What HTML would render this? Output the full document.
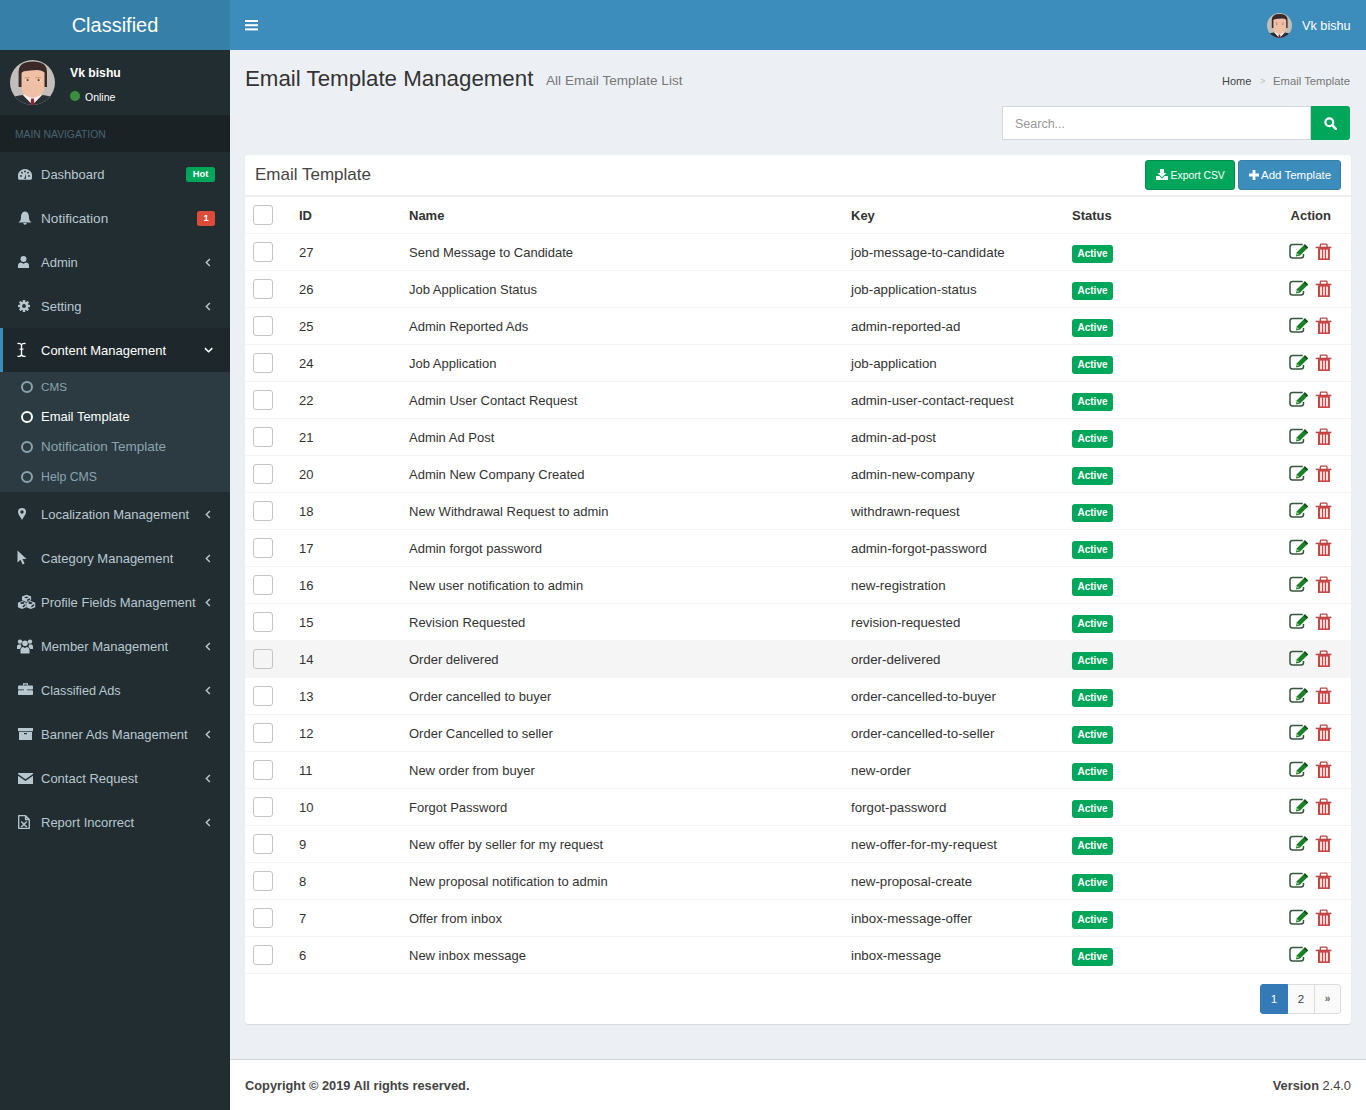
<!DOCTYPE html>
<html><head><meta charset="utf-8"><title>Email Template Management</title>
<style>
*{box-sizing:border-box;margin:0;padding:0}
html,body{width:1366px;height:1110px;overflow:hidden}
body{background:#ecf0f5;font-family:"Liberation Sans",sans-serif;color:#333;position:relative;font-size:13px}
.abs{position:absolute}
#logo{left:0;top:0;width:230px;height:50px;background:#367fa9;color:#fff;font-size:20px;line-height:50px;text-align:center}
#nav{left:230px;top:0;right:0;height:50px;background:#3c8dbc}
#side{left:0;top:50px;width:230px;height:1060px;background:#222d32}
#foot{left:230px;top:1059px;right:0;height:51px;background:#fff;border-top:1px solid #d2d6de}
.mi{position:absolute;left:0;width:230px;height:44px;color:#b8c7ce;font-size:13px}
.mi .t{position:absolute;left:41px;top:14px;line-height:16px;white-space:nowrap}
.mi svg.ic{position:absolute}
.mi .chev{position:absolute;left:204px;top:18px}
.sub{position:absolute;left:0;width:230px;height:30px;color:#8aa4af;font-size:13px}
.sub .t{position:absolute;left:41px;top:7px;line-height:16px;white-space:nowrap}
.sub .c{position:absolute;left:21px;top:9px;width:12px;height:12px;border:2px solid #8aa4af;border-radius:50%}
.mt{left:41px;line-height:16px;font-size:13px;white-space:nowrap}
.badge{position:absolute;color:#fff;font-weight:bold;font-size:9.4px;text-align:center;border-radius:2.5px}
#box{left:245px;top:155px;width:1106px;height:869px;background:#fff;border-radius:3px;box-shadow:0 1px 1px rgba(0,0,0,0.1)}
table{border-collapse:collapse;position:absolute;left:0;top:42px;width:1106px;table-layout:fixed}
td,th{height:37px;border-top:1px solid #f4f4f4;padding:2px 0 0 8px;text-align:left;white-space:nowrap;font-size:13px;color:#333;vertical-align:middle}
th{font-weight:bold;border-top:0;height:36px}
tr.h td{background:#f5f5f5}
.cb{display:inline-block;width:20px;height:20px;border:1px solid #c4c4c4;border-radius:3px;background:transparent;vertical-align:middle;position:relative;top:-1px}
.lbl{position:relative;top:1px;display:inline-block;background:#00a65a;color:#fff;font-weight:bold;font-size:10px;border-radius:3px;width:41px;height:18px;line-height:18px;text-align:center}
td.act{text-align:right;padding-right:15px}
.ai{display:inline-block;position:relative;width:50px;height:21px;vertical-align:middle;top:-1px}
</style></head>
<body>
<svg width="0" height="0" style="position:absolute">
<defs>
<symbol id="av" viewBox="0 0 45 45">
<clipPath id="avc"><circle cx="22.5" cy="22.5" r="22.5"/></clipPath>
<g clip-path="url(#avc)">
<rect width="45" height="45" fill="#c2bfbb"/>
<path d="M0 45 V39 Q5 35.5 13 35 L22.5 45Z M45 45 V39 Q40 35.5 32 35 L22.5 45Z" fill="#2b3036"/>
<path d="M13 35 L22.5 44.5 L32 35 L29 33.5 H16Z" fill="#f4f1ef"/>
<path d="M21.2 38.5 H23.8 L24.6 45 H20.4Z" fill="#8e2236"/>
<path d="M11.5 10 H34.5 V27 Q34.5 33 29 36 Q26 37.8 22.8 37.8 Q19.5 37.8 16.5 36 Q11.5 33 11.5 27Z" fill="#efc0a6"/>
<path d="M9.5 21 Q8.5 24 11.5 27Z M35.5 21 Q36.5 24 33.5 27Z" fill="#e8b296"/>
<path d="M8.6 27 V12 Q8.6 1.6 22.8 1.6 Q37 1.6 37 12 V27 H34.5 V12.5 Q32 10 27 10 Q20 10.3 14 11.3 Q11.5 12 11.5 13.5 V27Z" fill="#3a2b2a"/>
<path d="M14.5 17.6 H19.5 M25.5 17.6 H30.8" stroke="#d89a70" stroke-width="1.4"/>
<ellipse cx="17.3" cy="20.4" rx="2.4" ry="1.1" fill="#f7e6dc"/><ellipse cx="28.8" cy="20.4" rx="2.4" ry="1.1" fill="#f7e6dc"/>
<circle cx="17.6" cy="20.2" r="1.15" fill="#6b3a1f"/><circle cx="28.6" cy="20.2" r="1.15" fill="#6b3a1f"/>
</g>
</symbol>
</defs>
</svg>

<div id="logo" class="abs">Classified</div>
<div id="nav" class="abs">
  <svg class="abs" style="left:14.5px;top:20px" width="13" height="11" viewBox="0 0 13 11"><rect y="0" width="13" height="2" fill="#fff"/><rect y="4.2" width="13" height="2" fill="#fff"/><rect y="8.4" width="13" height="2" fill="#fff"/></svg>
  <svg class="abs" style="left:1037px;top:13px" width="25" height="25"><use href="#av"/></svg>
  <div class="abs" style="left:1072px;top:17.5px;line-height:16px;color:#fff;font-size:12.7px">Vk bishu</div>
</div>

<div id="side" class="abs">
  <svg class="abs" style="left:10px;top:10px" width="45" height="45"><use href="#av"/></svg>
  <div class="abs" style="left:70px;top:15px;line-height:16px;color:#fff;font-size:12.2px;font-weight:bold">Vk bishu</div>
  <div class="abs" style="left:70px;top:41px;width:10px;height:10px;border-radius:50%;background:#3a8f3e"></div>
  <div class="abs" style="left:85px;top:40.5px;line-height:12px;color:#fff;font-size:10.5px">Online</div>
  <div class="abs" style="left:0;top:65px;width:230px;height:37px;background:#1a2226;color:#4b646f;font-size:10.3px;line-height:39px;padding-left:15px">MAIN NAVIGATION</div>
</div>

<div class="abs" style="left:0;top:328px;width:230px;height:44px;background:#1e282c;border-left:3px solid #3c8dbc"></div>
<div class="abs" style="left:0;top:372px;width:230px;height:120px;background:#2c3b41"></div>
<svg class="abs" style="left:18px;top:169px" width="14" height="11" viewBox="0 0 14 11"><path d="M0.76 10.8 A7.2 7.2 0 1 1 13.24 10.8 Z" fill="#b8c7ce"/><circle cx="3" cy="7" r="0.9" fill="#222d32"/><circle cx="4" cy="3.7" r="0.9" fill="#222d32"/><circle cx="7" cy="2.4" r="0.9" fill="#222d32"/><circle cx="10" cy="3.7" r="0.9" fill="#222d32"/><circle cx="11" cy="7" r="0.9" fill="#222d32"/><path d="M6.2 10 L8 4.5 L7.8 10Z" fill="#222d32"/></svg>
<div class="abs mt" style="top:167px;color:#b8c7ce;font-size:13px">Dashboard</div>
<div class="abs badge" style="left:186px;top:167px;width:29px;height:15px;line-height:14px;background:#00a65a">Hot</div>
<svg class="abs" style="left:18px;top:211px" width="14" height="14" viewBox="0 0 14 14"><path d="M7 0.5 C3.5 1 3 4 3 6.5 C3 9 2 10 0.5 11.5 H13.5 C12 10 11 9 11 6.5 C11 4 10.5 1 7 0.5Z" fill="#b8c7ce"/><path d="M5.3 12 A1.7 1.7 0 0 0 8.7 12Z" fill="#b8c7ce"/></svg>
<div class="abs mt" style="top:211px;color:#b8c7ce;font-size:13.6px">Notification</div>
<div class="abs badge" style="left:197px;top:211px;width:18px;height:15px;line-height:14px;background:#dd4b39">1</div>
<svg class="abs" style="left:18px;top:256px" width="11" height="12" viewBox="0 0 11 12"><circle cx="5.5" cy="3" r="3" fill="#b8c7ce"/><path d="M0 12 V9.5 C0 7.5 1.5 6.5 3 6.5 L5.5 7.8 L8 6.5 C9.5 6.5 11 7.5 11 9.5 V12Z" fill="#b8c7ce"/></svg>
<div class="abs mt" style="top:255px;color:#b8c7ce;font-size:13px">Admin</div>
<svg class="abs" style="left:205px;top:258px" width="6" height="9" viewBox="0 0 6 9"><path d="M4.9 0.9 L1.3 4.5 L4.9 8.1" fill="none" stroke="#b8c7ce" stroke-width="1.45"/></svg>
<svg class="abs" style="left:18px;top:300px" width="12" height="12" viewBox="0 0 12 12"><g fill="#b8c7ce"><circle cx="6" cy="6" r="4.3"/><g><rect x="4.7" y="0" width="2.6" height="12" rx="0.6"/><rect x="4.7" y="0" width="2.6" height="12" rx="0.6" transform="rotate(45 6 6)"/><rect x="4.7" y="0" width="2.6" height="12" rx="0.6" transform="rotate(90 6 6)"/><rect x="4.7" y="0" width="2.6" height="12" rx="0.6" transform="rotate(135 6 6)"/></g></g><circle cx="6" cy="6" r="1.9" fill="#222d32"/></svg>
<div class="abs mt" style="top:299px;color:#b8c7ce;font-size:13px">Setting</div>
<svg class="abs" style="left:205px;top:302px" width="6" height="9" viewBox="0 0 6 9"><path d="M4.9 0.9 L1.3 4.5 L4.9 8.1" fill="none" stroke="#b8c7ce" stroke-width="1.45"/></svg>
<svg class="abs" style="left:17px;top:342px" width="9" height="16" viewBox="0 0 9 16"><path d="M1 1.5 Q3.6 1.1 4.5 2.9 Q5.4 1.1 8 1.5 M4.5 2.9 V12.9 M1 14.3 Q3.6 14.7 4.5 12.9 Q5.4 14.7 8 14.3 M3 7.1 H6" fill="none" stroke="#fff" stroke-width="1.35" stroke-linecap="round"/></svg>
<div class="abs mt" style="top:343px;color:#fff;font-size:13px">Content Management</div>
<svg class="abs" style="left:204px;top:346.5px" width="10" height="7" viewBox="0 0 10 7"><path d="M0.9 1.1 L4.6 4.8 L8.3 1.1" fill="none" stroke="#fff" stroke-width="1.5"/></svg>
<svg class="abs" style="left:18px;top:508px" width="8" height="12" viewBox="0 0 8 12"><path d="M4 0 A4 4 0 0 0 0 4 C0 6.5 2.5 9 4 12 C5.5 9 8 6.5 8 4 A4 4 0 0 0 4 0Z M4 2.3 A1.7 1.7 0 1 1 4 5.7 A1.7 1.7 0 1 1 4 2.3Z" fill="#b8c7ce" fill-rule="evenodd"/></svg>
<div class="abs mt" style="top:507px;color:#b8c7ce;font-size:13px">Localization Management</div>
<svg class="abs" style="left:205px;top:510px" width="6" height="9" viewBox="0 0 6 9"><path d="M4.9 0.9 L1.3 4.5 L4.9 8.1" fill="none" stroke="#b8c7ce" stroke-width="1.45"/></svg>
<svg class="abs" style="left:17px;top:550px" width="10" height="15" viewBox="0 0 10 15"><path d="M0.5 0.5 V12.5 L3.5 9.8 L5.6 14.5 L7.6 13.6 L5.5 9 H9.5Z" fill="#b8c7ce"/></svg>
<div class="abs mt" style="top:551px;color:#b8c7ce;font-size:13px">Category Management</div>
<svg class="abs" style="left:205px;top:554px" width="6" height="9" viewBox="0 0 6 9"><path d="M4.9 0.9 L1.3 4.5 L4.9 8.1" fill="none" stroke="#b8c7ce" stroke-width="1.45"/></svg>
<svg class="abs" style="left:14px;top:590px" width="24" height="24" viewBox="0 0 24 24"><g fill="#b8c7ce"><path d="M8 11 L12.1 12.8 V17.2 L8 19 L3.9 17.2 V12.8Z"/><path d="M16.75 11 L21.2 12.8 V17.2 L16.75 19 L12.3 17.2 V12.8Z"/><path d="M12.55 4.8 L17.1 6.6 V10.3 L12.55 12 L8 10.3 V6.6Z"/></g><g fill="#222d32"><path d="M10 7.4 L12.4 6.6 L14.8 7.4 L12.4 8.2Z"/><ellipse cx="8.4" cy="13" rx="2.1" ry="1.05"/><ellipse cx="16.4" cy="13" rx="2.1" ry="1.05"/></g><g stroke="#222d32" stroke-width="1.5" stroke-linecap="round"><path d="M13.6 10.2 L15.6 9.1"/><path d="M9.4 16.4 L11 15"/><path d="M17.9 16.4 L19.6 15"/></g></svg>
<div class="abs mt" style="top:595px;color:#b8c7ce;font-size:13px">Profile Fields Management</div>
<svg class="abs" style="left:205px;top:598px" width="6" height="9" viewBox="0 0 6 9"><path d="M4.9 0.9 L1.3 4.5 L4.9 8.1" fill="none" stroke="#b8c7ce" stroke-width="1.45"/></svg>
<svg class="abs" style="left:17px;top:638.5px" width="16" height="15" viewBox="0 0 16 15"><g fill="#b8c7ce"><circle cx="3" cy="2.6" r="2.2"/><circle cx="13" cy="2.6" r="2.2"/><circle cx="8" cy="4.2" r="2.8"/><path d="M0 10 V7.5 C0 6 1 5.4 2.2 5.4 H4.3 C3.8 6.4 4.2 7.5 4.6 8 C3.5 8.5 3 9.3 3 10Z"/><path d="M16 10 V7.5 C16 6 15 5.4 13.8 5.4 H11.7 C12.2 6.4 11.8 7.5 11.4 8 C12.5 8.5 13 9.3 13 10Z"/><path d="M3.5 14.5 V11 C3.5 9 5 8 6.2 8 L8 9 L9.8 8 C11 8 12.5 9 12.5 11 V14.5Z"/></g></svg>
<div class="abs mt" style="top:639px;color:#b8c7ce;font-size:13px">Member Management</div>
<svg class="abs" style="left:205px;top:642px" width="6" height="9" viewBox="0 0 6 9"><path d="M4.9 0.9 L1.3 4.5 L4.9 8.1" fill="none" stroke="#b8c7ce" stroke-width="1.45"/></svg>
<svg class="abs" style="left:17.5px;top:683px" width="15" height="12" viewBox="0 0 15 12"><g fill="#b8c7ce"><path d="M5 0.3 H10 V2.6 H8.9 V1.4 H6.1 V2.6 H5Z"/><rect x="0" y="2.6" width="15" height="3.9" rx="0.8"/><rect x="0" y="7.3" width="15" height="4.7" rx="0.8"/><rect x="6" y="6" width="3" height="2.2"/></g></svg>
<div class="abs mt" style="top:683px;color:#b8c7ce;font-size:12.7px">Classified Ads</div>
<svg class="abs" style="left:205px;top:686px" width="6" height="9" viewBox="0 0 6 9"><path d="M4.9 0.9 L1.3 4.5 L4.9 8.1" fill="none" stroke="#b8c7ce" stroke-width="1.45"/></svg>
<svg class="abs" style="left:17.5px;top:728px" width="15" height="12" viewBox="0 0 15 12"><g fill="#b8c7ce"><rect x="0" y="0" width="15" height="3.2"/><rect x="1" y="3.9" width="13" height="8.1"/></g><rect x="6" y="5" width="3" height="1.2" fill="#222d32"/></svg>
<div class="abs mt" style="top:727px;color:#b8c7ce;font-size:13px">Banner Ads Management</div>
<svg class="abs" style="left:205px;top:730px" width="6" height="9" viewBox="0 0 6 9"><path d="M4.9 0.9 L1.3 4.5 L4.9 8.1" fill="none" stroke="#b8c7ce" stroke-width="1.45"/></svg>
<svg class="abs" style="left:17.5px;top:773px" width="15" height="11" viewBox="0 0 15 11"><path d="M0 0 H15 V1 L7.5 6.2 L0 1Z" fill="#b8c7ce"/><path d="M0 2.8 L7.5 8 L15 2.8 V11 H0Z" fill="#b8c7ce"/></svg>
<div class="abs mt" style="top:771px;color:#b8c7ce;font-size:13px">Contact Request</div>
<svg class="abs" style="left:205px;top:774px" width="6" height="9" viewBox="0 0 6 9"><path d="M4.9 0.9 L1.3 4.5 L4.9 8.1" fill="none" stroke="#b8c7ce" stroke-width="1.45"/></svg>
<svg class="abs" style="left:18px;top:815px" width="12" height="14" viewBox="0 0 12 14"><path d="M0.7 0.7 H7.5 L11.3 4.5 V13.3 H0.7Z M7.5 0.7 V4.5 H11.3" fill="none" stroke="#b8c7ce" stroke-width="1.3" stroke-linejoin="round"/><path d="M3.2 6.5 L8.8 12 M8.8 6.5 L3.2 12" stroke="#b8c7ce" stroke-width="1.4"/></svg>
<div class="abs mt" style="top:815px;color:#b8c7ce;font-size:13px">Report Incorrect</div>
<svg class="abs" style="left:205px;top:818px" width="6" height="9" viewBox="0 0 6 9"><path d="M4.9 0.9 L1.3 4.5 L4.9 8.1" fill="none" stroke="#b8c7ce" stroke-width="1.45"/></svg>
<div class="abs" style="left:21px;top:381px;width:12px;height:12px;border:2px solid #8aa4af;border-radius:50%"></div>
<div class="abs mt" style="top:379px;color:#8aa4af;font-size:11.7px">CMS</div>
<div class="abs" style="left:21px;top:411px;width:12px;height:12px;border:2px solid #fff;border-radius:50%"></div>
<div class="abs mt" style="top:409px;color:#fff;font-size:13px">Email Template</div>
<div class="abs" style="left:21px;top:441px;width:12px;height:12px;border:2px solid #8aa4af;border-radius:50%"></div>
<div class="abs mt" style="top:439px;color:#8aa4af;font-size:13.5px">Notification Template</div>
<div class="abs" style="left:21px;top:471px;width:12px;height:12px;border:2px solid #8aa4af;border-radius:50%"></div>
<div class="abs mt" style="top:469px;color:#8aa4af;font-size:12.3px">Help CMS</div>
<div id="content" class="abs" style="left:230px;top:50px;right:0;height:1009px">
  <div class="abs" style="left:15px;top:14px;line-height:30px;font-size:22.3px;color:#333;white-space:nowrap">Email Template Management</div>
  <div class="abs" style="left:316px;top:22px;line-height:18px;font-size:13.6px;color:#777;white-space:nowrap">All Email Template List</div>
  <div class="abs" style="left:992px;top:24px;line-height:14px;font-size:11px;color:#444;white-space:nowrap">Home</div>
  <div class="abs" style="left:1030px;top:24px;line-height:14px;font-size:9.5px;color:#bbb">&gt;</div>
  <div class="abs" style="left:1043px;top:24px;line-height:14px;font-size:11.3px;color:#777;white-space:nowrap">Email Template</div>
  <div class="abs" style="left:772px;top:56px;width:309px;height:34px;background:#fff;border:1px solid #d2d6de"></div>
  <div class="abs" style="left:785px;top:66px;line-height:16px;font-size:12.5px;color:#999">Search...</div>
  <div class="abs" style="left:1081px;top:56px;width:39px;height:34px;background:#00a65a;border-radius:0 3px 3px 0"><svg class="abs" style="left:13px;top:11px" width="13" height="13" viewBox="0 0 13 13"><circle cx="5.3" cy="5.3" r="3.9" fill="none" stroke="#fff" stroke-width="2.2"/><path d="M8.2 8.2 L11.8 11.8" stroke="#fff" stroke-width="2.6" stroke-linecap="round"/></svg></div>
</div>

<div id="box" class="abs">
  <div class="abs" style="left:0;top:0;width:1106px;height:42px;border-bottom:2px solid #f0f0f0"></div>
  <div class="abs" style="left:0;top:818px;width:1106px;height:1px;background:#f4f4f4"></div>
  <div class="abs" style="left:10px;top:9px;line-height:22px;font-size:17px;color:#444">Email Template</div>
  <div class="abs" style="left:900px;top:5px;width:90px;height:30px;background:#00a65a;border:1px solid #008d4c;border-radius:3px;color:#fff;font-size:10.4px;line-height:30px;padding-left:24.5px"><svg class="abs" style="left:10px;top:8px" width="12" height="11" viewBox="0 0 12 11"><path d="M4 0 H8 V4 H10.5 L6 8.3 L1.5 4 H4Z" fill="#fff"/><path d="M0 7 H3.3 L6 9.6 L8.7 7 H12 V11 H0Z" fill="#fff"/></svg>Export CSV</div>
  <div class="abs" style="left:993px;top:5px;width:103px;height:30px;background:#3c8dbc;border:1px solid #367fa9;border-radius:3px;color:#fff;font-size:11.5px;line-height:28px;padding-left:22px"><svg class="abs" style="left:10px;top:9px" width="10" height="10" viewBox="0 0 10 10"><path d="M3.6 0 H6.4 V3.6 H10 V6.4 H6.4 V10 H3.6 V6.4 H0 V3.6 H3.6Z" fill="#fff"/></svg>Add Template</div>
  <div class="abs" style="left:1015px;top:829px;width:28px;height:30px;background:#337ab7;border:1px solid #337ab7;border-radius:3px 0 0 3px;color:#fff;font-size:11.5px;line-height:28px;text-align:center">1</div>
  <div class="abs" style="left:1043px;top:829px;width:27px;height:30px;background:#fafafa;border:1px solid #ddd;border-left:0;color:#444;font-size:11.5px;line-height:28px;text-align:center">2</div>
  <div class="abs" style="left:1069px;top:829px;width:27px;height:30px;background:#fafafa;border:1px solid #ddd;border-radius:0 3px 3px 0;color:#666;font-size:10px;font-weight:bold;line-height:28px;text-align:center">&raquo;</div>
  <table id="tbl"><colgroup><col style="width:46px"><col style="width:110px"><col style="width:442px"><col style="width:221px"><col style="width:180px"><col></colgroup><tr><th><span class="cb" style="top:-1px"></span></th><th>ID</th><th>Name</th><th>Key</th><th>Status</th><th class="act" style="text-align:right;padding-right:20px">Action</th></tr><tr><td><span class="cb"></span></td><td>27</td><td>Send Message to Candidate</td><td style="font-size:13.3px">job-message-to-candidate</td><td><span class="lbl">Active</span></td><td class="act"><span class="ai"><svg class="abs" style="left:0;top:0" width="25" height="21" viewBox="0 0 25 21"><path d="M16.7 3.6 H6.5 Q4 3.6 4 6.1 V14.6 Q4 17.1 6.5 17.1 H15 Q17.5 17.1 17.5 14.6 V13" fill="none" stroke="#35573d" stroke-width="1.5"/><path d="M10.9 11.2 L18.9 3.2 L22.1 6.4 L14.1 14.4 L10 15.5Z" fill="#1c8026"/><path d="M17.6 4.5 L18.9 3.2 L22.1 6.4 L20.8 7.7Z" fill="#0f4d18"/><circle cx="11.9" cy="13.3" r="0.8" fill="#bfe8bf"/></svg><svg class="abs" style="left:25px;top:0" width="25" height="21" viewBox="0 0 25 21"><path d="M9.3 6 V3.9 Q9.3 3.1 10.1 3.1 H15.2 Q16 3.1 16 3.9 V6" fill="none" stroke="#b84545" stroke-width="1.3"/><rect x="4.7" y="5.7" width="15.7" height="1.5" fill="#bf4343"/><rect x="7" y="7" width="11.9" height="12" rx="0.6" fill="#cc4444"/><rect x="9" y="8.6" width="2" height="8.8" fill="#fde0dc"/><rect x="12" y="8.6" width="2" height="8.8" fill="#fbd5d5"/><rect x="15" y="8.6" width="2" height="8.8" fill="#fde0dc"/></svg></span></td></tr><tr><td><span class="cb"></span></td><td>26</td><td>Job Application Status</td><td style="font-size:13.3px">job-application-status</td><td><span class="lbl">Active</span></td><td class="act"><span class="ai"><svg class="abs" style="left:0;top:0" width="25" height="21" viewBox="0 0 25 21"><path d="M16.7 3.6 H6.5 Q4 3.6 4 6.1 V14.6 Q4 17.1 6.5 17.1 H15 Q17.5 17.1 17.5 14.6 V13" fill="none" stroke="#35573d" stroke-width="1.5"/><path d="M10.9 11.2 L18.9 3.2 L22.1 6.4 L14.1 14.4 L10 15.5Z" fill="#1c8026"/><path d="M17.6 4.5 L18.9 3.2 L22.1 6.4 L20.8 7.7Z" fill="#0f4d18"/><circle cx="11.9" cy="13.3" r="0.8" fill="#bfe8bf"/></svg><svg class="abs" style="left:25px;top:0" width="25" height="21" viewBox="0 0 25 21"><path d="M9.3 6 V3.9 Q9.3 3.1 10.1 3.1 H15.2 Q16 3.1 16 3.9 V6" fill="none" stroke="#b84545" stroke-width="1.3"/><rect x="4.7" y="5.7" width="15.7" height="1.5" fill="#bf4343"/><rect x="7" y="7" width="11.9" height="12" rx="0.6" fill="#cc4444"/><rect x="9" y="8.6" width="2" height="8.8" fill="#fde0dc"/><rect x="12" y="8.6" width="2" height="8.8" fill="#fbd5d5"/><rect x="15" y="8.6" width="2" height="8.8" fill="#fde0dc"/></svg></span></td></tr><tr><td><span class="cb"></span></td><td>25</td><td>Admin Reported Ads</td><td style="font-size:13.3px">admin-reported-ad</td><td><span class="lbl">Active</span></td><td class="act"><span class="ai"><svg class="abs" style="left:0;top:0" width="25" height="21" viewBox="0 0 25 21"><path d="M16.7 3.6 H6.5 Q4 3.6 4 6.1 V14.6 Q4 17.1 6.5 17.1 H15 Q17.5 17.1 17.5 14.6 V13" fill="none" stroke="#35573d" stroke-width="1.5"/><path d="M10.9 11.2 L18.9 3.2 L22.1 6.4 L14.1 14.4 L10 15.5Z" fill="#1c8026"/><path d="M17.6 4.5 L18.9 3.2 L22.1 6.4 L20.8 7.7Z" fill="#0f4d18"/><circle cx="11.9" cy="13.3" r="0.8" fill="#bfe8bf"/></svg><svg class="abs" style="left:25px;top:0" width="25" height="21" viewBox="0 0 25 21"><path d="M9.3 6 V3.9 Q9.3 3.1 10.1 3.1 H15.2 Q16 3.1 16 3.9 V6" fill="none" stroke="#b84545" stroke-width="1.3"/><rect x="4.7" y="5.7" width="15.7" height="1.5" fill="#bf4343"/><rect x="7" y="7" width="11.9" height="12" rx="0.6" fill="#cc4444"/><rect x="9" y="8.6" width="2" height="8.8" fill="#fde0dc"/><rect x="12" y="8.6" width="2" height="8.8" fill="#fbd5d5"/><rect x="15" y="8.6" width="2" height="8.8" fill="#fde0dc"/></svg></span></td></tr><tr><td><span class="cb"></span></td><td>24</td><td>Job Application</td><td style="font-size:13.3px">job-application</td><td><span class="lbl">Active</span></td><td class="act"><span class="ai"><svg class="abs" style="left:0;top:0" width="25" height="21" viewBox="0 0 25 21"><path d="M16.7 3.6 H6.5 Q4 3.6 4 6.1 V14.6 Q4 17.1 6.5 17.1 H15 Q17.5 17.1 17.5 14.6 V13" fill="none" stroke="#35573d" stroke-width="1.5"/><path d="M10.9 11.2 L18.9 3.2 L22.1 6.4 L14.1 14.4 L10 15.5Z" fill="#1c8026"/><path d="M17.6 4.5 L18.9 3.2 L22.1 6.4 L20.8 7.7Z" fill="#0f4d18"/><circle cx="11.9" cy="13.3" r="0.8" fill="#bfe8bf"/></svg><svg class="abs" style="left:25px;top:0" width="25" height="21" viewBox="0 0 25 21"><path d="M9.3 6 V3.9 Q9.3 3.1 10.1 3.1 H15.2 Q16 3.1 16 3.9 V6" fill="none" stroke="#b84545" stroke-width="1.3"/><rect x="4.7" y="5.7" width="15.7" height="1.5" fill="#bf4343"/><rect x="7" y="7" width="11.9" height="12" rx="0.6" fill="#cc4444"/><rect x="9" y="8.6" width="2" height="8.8" fill="#fde0dc"/><rect x="12" y="8.6" width="2" height="8.8" fill="#fbd5d5"/><rect x="15" y="8.6" width="2" height="8.8" fill="#fde0dc"/></svg></span></td></tr><tr><td><span class="cb"></span></td><td>22</td><td>Admin User Contact Request</td><td style="font-size:13.3px">admin-user-contact-request</td><td><span class="lbl">Active</span></td><td class="act"><span class="ai"><svg class="abs" style="left:0;top:0" width="25" height="21" viewBox="0 0 25 21"><path d="M16.7 3.6 H6.5 Q4 3.6 4 6.1 V14.6 Q4 17.1 6.5 17.1 H15 Q17.5 17.1 17.5 14.6 V13" fill="none" stroke="#35573d" stroke-width="1.5"/><path d="M10.9 11.2 L18.9 3.2 L22.1 6.4 L14.1 14.4 L10 15.5Z" fill="#1c8026"/><path d="M17.6 4.5 L18.9 3.2 L22.1 6.4 L20.8 7.7Z" fill="#0f4d18"/><circle cx="11.9" cy="13.3" r="0.8" fill="#bfe8bf"/></svg><svg class="abs" style="left:25px;top:0" width="25" height="21" viewBox="0 0 25 21"><path d="M9.3 6 V3.9 Q9.3 3.1 10.1 3.1 H15.2 Q16 3.1 16 3.9 V6" fill="none" stroke="#b84545" stroke-width="1.3"/><rect x="4.7" y="5.7" width="15.7" height="1.5" fill="#bf4343"/><rect x="7" y="7" width="11.9" height="12" rx="0.6" fill="#cc4444"/><rect x="9" y="8.6" width="2" height="8.8" fill="#fde0dc"/><rect x="12" y="8.6" width="2" height="8.8" fill="#fbd5d5"/><rect x="15" y="8.6" width="2" height="8.8" fill="#fde0dc"/></svg></span></td></tr><tr><td><span class="cb"></span></td><td>21</td><td>Admin Ad Post</td><td style="font-size:13.3px">admin-ad-post</td><td><span class="lbl">Active</span></td><td class="act"><span class="ai"><svg class="abs" style="left:0;top:0" width="25" height="21" viewBox="0 0 25 21"><path d="M16.7 3.6 H6.5 Q4 3.6 4 6.1 V14.6 Q4 17.1 6.5 17.1 H15 Q17.5 17.1 17.5 14.6 V13" fill="none" stroke="#35573d" stroke-width="1.5"/><path d="M10.9 11.2 L18.9 3.2 L22.1 6.4 L14.1 14.4 L10 15.5Z" fill="#1c8026"/><path d="M17.6 4.5 L18.9 3.2 L22.1 6.4 L20.8 7.7Z" fill="#0f4d18"/><circle cx="11.9" cy="13.3" r="0.8" fill="#bfe8bf"/></svg><svg class="abs" style="left:25px;top:0" width="25" height="21" viewBox="0 0 25 21"><path d="M9.3 6 V3.9 Q9.3 3.1 10.1 3.1 H15.2 Q16 3.1 16 3.9 V6" fill="none" stroke="#b84545" stroke-width="1.3"/><rect x="4.7" y="5.7" width="15.7" height="1.5" fill="#bf4343"/><rect x="7" y="7" width="11.9" height="12" rx="0.6" fill="#cc4444"/><rect x="9" y="8.6" width="2" height="8.8" fill="#fde0dc"/><rect x="12" y="8.6" width="2" height="8.8" fill="#fbd5d5"/><rect x="15" y="8.6" width="2" height="8.8" fill="#fde0dc"/></svg></span></td></tr><tr><td><span class="cb"></span></td><td>20</td><td>Admin New Company Created</td><td style="font-size:13.3px">admin-new-company</td><td><span class="lbl">Active</span></td><td class="act"><span class="ai"><svg class="abs" style="left:0;top:0" width="25" height="21" viewBox="0 0 25 21"><path d="M16.7 3.6 H6.5 Q4 3.6 4 6.1 V14.6 Q4 17.1 6.5 17.1 H15 Q17.5 17.1 17.5 14.6 V13" fill="none" stroke="#35573d" stroke-width="1.5"/><path d="M10.9 11.2 L18.9 3.2 L22.1 6.4 L14.1 14.4 L10 15.5Z" fill="#1c8026"/><path d="M17.6 4.5 L18.9 3.2 L22.1 6.4 L20.8 7.7Z" fill="#0f4d18"/><circle cx="11.9" cy="13.3" r="0.8" fill="#bfe8bf"/></svg><svg class="abs" style="left:25px;top:0" width="25" height="21" viewBox="0 0 25 21"><path d="M9.3 6 V3.9 Q9.3 3.1 10.1 3.1 H15.2 Q16 3.1 16 3.9 V6" fill="none" stroke="#b84545" stroke-width="1.3"/><rect x="4.7" y="5.7" width="15.7" height="1.5" fill="#bf4343"/><rect x="7" y="7" width="11.9" height="12" rx="0.6" fill="#cc4444"/><rect x="9" y="8.6" width="2" height="8.8" fill="#fde0dc"/><rect x="12" y="8.6" width="2" height="8.8" fill="#fbd5d5"/><rect x="15" y="8.6" width="2" height="8.8" fill="#fde0dc"/></svg></span></td></tr><tr><td><span class="cb"></span></td><td>18</td><td>New Withdrawal Request to admin</td><td style="font-size:13.3px">withdrawn-request</td><td><span class="lbl">Active</span></td><td class="act"><span class="ai"><svg class="abs" style="left:0;top:0" width="25" height="21" viewBox="0 0 25 21"><path d="M16.7 3.6 H6.5 Q4 3.6 4 6.1 V14.6 Q4 17.1 6.5 17.1 H15 Q17.5 17.1 17.5 14.6 V13" fill="none" stroke="#35573d" stroke-width="1.5"/><path d="M10.9 11.2 L18.9 3.2 L22.1 6.4 L14.1 14.4 L10 15.5Z" fill="#1c8026"/><path d="M17.6 4.5 L18.9 3.2 L22.1 6.4 L20.8 7.7Z" fill="#0f4d18"/><circle cx="11.9" cy="13.3" r="0.8" fill="#bfe8bf"/></svg><svg class="abs" style="left:25px;top:0" width="25" height="21" viewBox="0 0 25 21"><path d="M9.3 6 V3.9 Q9.3 3.1 10.1 3.1 H15.2 Q16 3.1 16 3.9 V6" fill="none" stroke="#b84545" stroke-width="1.3"/><rect x="4.7" y="5.7" width="15.7" height="1.5" fill="#bf4343"/><rect x="7" y="7" width="11.9" height="12" rx="0.6" fill="#cc4444"/><rect x="9" y="8.6" width="2" height="8.8" fill="#fde0dc"/><rect x="12" y="8.6" width="2" height="8.8" fill="#fbd5d5"/><rect x="15" y="8.6" width="2" height="8.8" fill="#fde0dc"/></svg></span></td></tr><tr><td><span class="cb"></span></td><td>17</td><td>Admin forgot password</td><td style="font-size:13.3px">admin-forgot-password</td><td><span class="lbl">Active</span></td><td class="act"><span class="ai"><svg class="abs" style="left:0;top:0" width="25" height="21" viewBox="0 0 25 21"><path d="M16.7 3.6 H6.5 Q4 3.6 4 6.1 V14.6 Q4 17.1 6.5 17.1 H15 Q17.5 17.1 17.5 14.6 V13" fill="none" stroke="#35573d" stroke-width="1.5"/><path d="M10.9 11.2 L18.9 3.2 L22.1 6.4 L14.1 14.4 L10 15.5Z" fill="#1c8026"/><path d="M17.6 4.5 L18.9 3.2 L22.1 6.4 L20.8 7.7Z" fill="#0f4d18"/><circle cx="11.9" cy="13.3" r="0.8" fill="#bfe8bf"/></svg><svg class="abs" style="left:25px;top:0" width="25" height="21" viewBox="0 0 25 21"><path d="M9.3 6 V3.9 Q9.3 3.1 10.1 3.1 H15.2 Q16 3.1 16 3.9 V6" fill="none" stroke="#b84545" stroke-width="1.3"/><rect x="4.7" y="5.7" width="15.7" height="1.5" fill="#bf4343"/><rect x="7" y="7" width="11.9" height="12" rx="0.6" fill="#cc4444"/><rect x="9" y="8.6" width="2" height="8.8" fill="#fde0dc"/><rect x="12" y="8.6" width="2" height="8.8" fill="#fbd5d5"/><rect x="15" y="8.6" width="2" height="8.8" fill="#fde0dc"/></svg></span></td></tr><tr><td><span class="cb"></span></td><td>16</td><td>New user notification to admin</td><td style="font-size:13.3px">new-registration</td><td><span class="lbl">Active</span></td><td class="act"><span class="ai"><svg class="abs" style="left:0;top:0" width="25" height="21" viewBox="0 0 25 21"><path d="M16.7 3.6 H6.5 Q4 3.6 4 6.1 V14.6 Q4 17.1 6.5 17.1 H15 Q17.5 17.1 17.5 14.6 V13" fill="none" stroke="#35573d" stroke-width="1.5"/><path d="M10.9 11.2 L18.9 3.2 L22.1 6.4 L14.1 14.4 L10 15.5Z" fill="#1c8026"/><path d="M17.6 4.5 L18.9 3.2 L22.1 6.4 L20.8 7.7Z" fill="#0f4d18"/><circle cx="11.9" cy="13.3" r="0.8" fill="#bfe8bf"/></svg><svg class="abs" style="left:25px;top:0" width="25" height="21" viewBox="0 0 25 21"><path d="M9.3 6 V3.9 Q9.3 3.1 10.1 3.1 H15.2 Q16 3.1 16 3.9 V6" fill="none" stroke="#b84545" stroke-width="1.3"/><rect x="4.7" y="5.7" width="15.7" height="1.5" fill="#bf4343"/><rect x="7" y="7" width="11.9" height="12" rx="0.6" fill="#cc4444"/><rect x="9" y="8.6" width="2" height="8.8" fill="#fde0dc"/><rect x="12" y="8.6" width="2" height="8.8" fill="#fbd5d5"/><rect x="15" y="8.6" width="2" height="8.8" fill="#fde0dc"/></svg></span></td></tr><tr><td><span class="cb"></span></td><td>15</td><td>Revision Requested</td><td style="font-size:13.3px">revision-requested</td><td><span class="lbl">Active</span></td><td class="act"><span class="ai"><svg class="abs" style="left:0;top:0" width="25" height="21" viewBox="0 0 25 21"><path d="M16.7 3.6 H6.5 Q4 3.6 4 6.1 V14.6 Q4 17.1 6.5 17.1 H15 Q17.5 17.1 17.5 14.6 V13" fill="none" stroke="#35573d" stroke-width="1.5"/><path d="M10.9 11.2 L18.9 3.2 L22.1 6.4 L14.1 14.4 L10 15.5Z" fill="#1c8026"/><path d="M17.6 4.5 L18.9 3.2 L22.1 6.4 L20.8 7.7Z" fill="#0f4d18"/><circle cx="11.9" cy="13.3" r="0.8" fill="#bfe8bf"/></svg><svg class="abs" style="left:25px;top:0" width="25" height="21" viewBox="0 0 25 21"><path d="M9.3 6 V3.9 Q9.3 3.1 10.1 3.1 H15.2 Q16 3.1 16 3.9 V6" fill="none" stroke="#b84545" stroke-width="1.3"/><rect x="4.7" y="5.7" width="15.7" height="1.5" fill="#bf4343"/><rect x="7" y="7" width="11.9" height="12" rx="0.6" fill="#cc4444"/><rect x="9" y="8.6" width="2" height="8.8" fill="#fde0dc"/><rect x="12" y="8.6" width="2" height="8.8" fill="#fbd5d5"/><rect x="15" y="8.6" width="2" height="8.8" fill="#fde0dc"/></svg></span></td></tr><tr class="h"><td><span class="cb"></span></td><td>14</td><td>Order delivered</td><td style="font-size:13.3px">order-delivered</td><td><span class="lbl">Active</span></td><td class="act"><span class="ai"><svg class="abs" style="left:0;top:0" width="25" height="21" viewBox="0 0 25 21"><path d="M16.7 3.6 H6.5 Q4 3.6 4 6.1 V14.6 Q4 17.1 6.5 17.1 H15 Q17.5 17.1 17.5 14.6 V13" fill="none" stroke="#35573d" stroke-width="1.5"/><path d="M10.9 11.2 L18.9 3.2 L22.1 6.4 L14.1 14.4 L10 15.5Z" fill="#1c8026"/><path d="M17.6 4.5 L18.9 3.2 L22.1 6.4 L20.8 7.7Z" fill="#0f4d18"/><circle cx="11.9" cy="13.3" r="0.8" fill="#bfe8bf"/></svg><svg class="abs" style="left:25px;top:0" width="25" height="21" viewBox="0 0 25 21"><path d="M9.3 6 V3.9 Q9.3 3.1 10.1 3.1 H15.2 Q16 3.1 16 3.9 V6" fill="none" stroke="#b84545" stroke-width="1.3"/><rect x="4.7" y="5.7" width="15.7" height="1.5" fill="#bf4343"/><rect x="7" y="7" width="11.9" height="12" rx="0.6" fill="#cc4444"/><rect x="9" y="8.6" width="2" height="8.8" fill="#fde0dc"/><rect x="12" y="8.6" width="2" height="8.8" fill="#fbd5d5"/><rect x="15" y="8.6" width="2" height="8.8" fill="#fde0dc"/></svg></span></td></tr><tr><td><span class="cb"></span></td><td>13</td><td>Order cancelled to buyer</td><td style="font-size:13.3px">order-cancelled-to-buyer</td><td><span class="lbl">Active</span></td><td class="act"><span class="ai"><svg class="abs" style="left:0;top:0" width="25" height="21" viewBox="0 0 25 21"><path d="M16.7 3.6 H6.5 Q4 3.6 4 6.1 V14.6 Q4 17.1 6.5 17.1 H15 Q17.5 17.1 17.5 14.6 V13" fill="none" stroke="#35573d" stroke-width="1.5"/><path d="M10.9 11.2 L18.9 3.2 L22.1 6.4 L14.1 14.4 L10 15.5Z" fill="#1c8026"/><path d="M17.6 4.5 L18.9 3.2 L22.1 6.4 L20.8 7.7Z" fill="#0f4d18"/><circle cx="11.9" cy="13.3" r="0.8" fill="#bfe8bf"/></svg><svg class="abs" style="left:25px;top:0" width="25" height="21" viewBox="0 0 25 21"><path d="M9.3 6 V3.9 Q9.3 3.1 10.1 3.1 H15.2 Q16 3.1 16 3.9 V6" fill="none" stroke="#b84545" stroke-width="1.3"/><rect x="4.7" y="5.7" width="15.7" height="1.5" fill="#bf4343"/><rect x="7" y="7" width="11.9" height="12" rx="0.6" fill="#cc4444"/><rect x="9" y="8.6" width="2" height="8.8" fill="#fde0dc"/><rect x="12" y="8.6" width="2" height="8.8" fill="#fbd5d5"/><rect x="15" y="8.6" width="2" height="8.8" fill="#fde0dc"/></svg></span></td></tr><tr><td><span class="cb"></span></td><td>12</td><td>Order Cancelled to seller</td><td style="font-size:13.3px">order-cancelled-to-seller</td><td><span class="lbl">Active</span></td><td class="act"><span class="ai"><svg class="abs" style="left:0;top:0" width="25" height="21" viewBox="0 0 25 21"><path d="M16.7 3.6 H6.5 Q4 3.6 4 6.1 V14.6 Q4 17.1 6.5 17.1 H15 Q17.5 17.1 17.5 14.6 V13" fill="none" stroke="#35573d" stroke-width="1.5"/><path d="M10.9 11.2 L18.9 3.2 L22.1 6.4 L14.1 14.4 L10 15.5Z" fill="#1c8026"/><path d="M17.6 4.5 L18.9 3.2 L22.1 6.4 L20.8 7.7Z" fill="#0f4d18"/><circle cx="11.9" cy="13.3" r="0.8" fill="#bfe8bf"/></svg><svg class="abs" style="left:25px;top:0" width="25" height="21" viewBox="0 0 25 21"><path d="M9.3 6 V3.9 Q9.3 3.1 10.1 3.1 H15.2 Q16 3.1 16 3.9 V6" fill="none" stroke="#b84545" stroke-width="1.3"/><rect x="4.7" y="5.7" width="15.7" height="1.5" fill="#bf4343"/><rect x="7" y="7" width="11.9" height="12" rx="0.6" fill="#cc4444"/><rect x="9" y="8.6" width="2" height="8.8" fill="#fde0dc"/><rect x="12" y="8.6" width="2" height="8.8" fill="#fbd5d5"/><rect x="15" y="8.6" width="2" height="8.8" fill="#fde0dc"/></svg></span></td></tr><tr><td><span class="cb"></span></td><td>11</td><td>New order from buyer</td><td style="font-size:13.3px">new-order</td><td><span class="lbl">Active</span></td><td class="act"><span class="ai"><svg class="abs" style="left:0;top:0" width="25" height="21" viewBox="0 0 25 21"><path d="M16.7 3.6 H6.5 Q4 3.6 4 6.1 V14.6 Q4 17.1 6.5 17.1 H15 Q17.5 17.1 17.5 14.6 V13" fill="none" stroke="#35573d" stroke-width="1.5"/><path d="M10.9 11.2 L18.9 3.2 L22.1 6.4 L14.1 14.4 L10 15.5Z" fill="#1c8026"/><path d="M17.6 4.5 L18.9 3.2 L22.1 6.4 L20.8 7.7Z" fill="#0f4d18"/><circle cx="11.9" cy="13.3" r="0.8" fill="#bfe8bf"/></svg><svg class="abs" style="left:25px;top:0" width="25" height="21" viewBox="0 0 25 21"><path d="M9.3 6 V3.9 Q9.3 3.1 10.1 3.1 H15.2 Q16 3.1 16 3.9 V6" fill="none" stroke="#b84545" stroke-width="1.3"/><rect x="4.7" y="5.7" width="15.7" height="1.5" fill="#bf4343"/><rect x="7" y="7" width="11.9" height="12" rx="0.6" fill="#cc4444"/><rect x="9" y="8.6" width="2" height="8.8" fill="#fde0dc"/><rect x="12" y="8.6" width="2" height="8.8" fill="#fbd5d5"/><rect x="15" y="8.6" width="2" height="8.8" fill="#fde0dc"/></svg></span></td></tr><tr><td><span class="cb"></span></td><td>10</td><td>Forgot Password</td><td style="font-size:13.3px">forgot-password</td><td><span class="lbl">Active</span></td><td class="act"><span class="ai"><svg class="abs" style="left:0;top:0" width="25" height="21" viewBox="0 0 25 21"><path d="M16.7 3.6 H6.5 Q4 3.6 4 6.1 V14.6 Q4 17.1 6.5 17.1 H15 Q17.5 17.1 17.5 14.6 V13" fill="none" stroke="#35573d" stroke-width="1.5"/><path d="M10.9 11.2 L18.9 3.2 L22.1 6.4 L14.1 14.4 L10 15.5Z" fill="#1c8026"/><path d="M17.6 4.5 L18.9 3.2 L22.1 6.4 L20.8 7.7Z" fill="#0f4d18"/><circle cx="11.9" cy="13.3" r="0.8" fill="#bfe8bf"/></svg><svg class="abs" style="left:25px;top:0" width="25" height="21" viewBox="0 0 25 21"><path d="M9.3 6 V3.9 Q9.3 3.1 10.1 3.1 H15.2 Q16 3.1 16 3.9 V6" fill="none" stroke="#b84545" stroke-width="1.3"/><rect x="4.7" y="5.7" width="15.7" height="1.5" fill="#bf4343"/><rect x="7" y="7" width="11.9" height="12" rx="0.6" fill="#cc4444"/><rect x="9" y="8.6" width="2" height="8.8" fill="#fde0dc"/><rect x="12" y="8.6" width="2" height="8.8" fill="#fbd5d5"/><rect x="15" y="8.6" width="2" height="8.8" fill="#fde0dc"/></svg></span></td></tr><tr><td><span class="cb"></span></td><td>9</td><td>New offer by seller for my request</td><td style="font-size:13.3px">new-offer-for-my-request</td><td><span class="lbl">Active</span></td><td class="act"><span class="ai"><svg class="abs" style="left:0;top:0" width="25" height="21" viewBox="0 0 25 21"><path d="M16.7 3.6 H6.5 Q4 3.6 4 6.1 V14.6 Q4 17.1 6.5 17.1 H15 Q17.5 17.1 17.5 14.6 V13" fill="none" stroke="#35573d" stroke-width="1.5"/><path d="M10.9 11.2 L18.9 3.2 L22.1 6.4 L14.1 14.4 L10 15.5Z" fill="#1c8026"/><path d="M17.6 4.5 L18.9 3.2 L22.1 6.4 L20.8 7.7Z" fill="#0f4d18"/><circle cx="11.9" cy="13.3" r="0.8" fill="#bfe8bf"/></svg><svg class="abs" style="left:25px;top:0" width="25" height="21" viewBox="0 0 25 21"><path d="M9.3 6 V3.9 Q9.3 3.1 10.1 3.1 H15.2 Q16 3.1 16 3.9 V6" fill="none" stroke="#b84545" stroke-width="1.3"/><rect x="4.7" y="5.7" width="15.7" height="1.5" fill="#bf4343"/><rect x="7" y="7" width="11.9" height="12" rx="0.6" fill="#cc4444"/><rect x="9" y="8.6" width="2" height="8.8" fill="#fde0dc"/><rect x="12" y="8.6" width="2" height="8.8" fill="#fbd5d5"/><rect x="15" y="8.6" width="2" height="8.8" fill="#fde0dc"/></svg></span></td></tr><tr><td><span class="cb"></span></td><td>8</td><td>New proposal notification to admin</td><td style="font-size:13.3px">new-proposal-create</td><td><span class="lbl">Active</span></td><td class="act"><span class="ai"><svg class="abs" style="left:0;top:0" width="25" height="21" viewBox="0 0 25 21"><path d="M16.7 3.6 H6.5 Q4 3.6 4 6.1 V14.6 Q4 17.1 6.5 17.1 H15 Q17.5 17.1 17.5 14.6 V13" fill="none" stroke="#35573d" stroke-width="1.5"/><path d="M10.9 11.2 L18.9 3.2 L22.1 6.4 L14.1 14.4 L10 15.5Z" fill="#1c8026"/><path d="M17.6 4.5 L18.9 3.2 L22.1 6.4 L20.8 7.7Z" fill="#0f4d18"/><circle cx="11.9" cy="13.3" r="0.8" fill="#bfe8bf"/></svg><svg class="abs" style="left:25px;top:0" width="25" height="21" viewBox="0 0 25 21"><path d="M9.3 6 V3.9 Q9.3 3.1 10.1 3.1 H15.2 Q16 3.1 16 3.9 V6" fill="none" stroke="#b84545" stroke-width="1.3"/><rect x="4.7" y="5.7" width="15.7" height="1.5" fill="#bf4343"/><rect x="7" y="7" width="11.9" height="12" rx="0.6" fill="#cc4444"/><rect x="9" y="8.6" width="2" height="8.8" fill="#fde0dc"/><rect x="12" y="8.6" width="2" height="8.8" fill="#fbd5d5"/><rect x="15" y="8.6" width="2" height="8.8" fill="#fde0dc"/></svg></span></td></tr><tr><td><span class="cb"></span></td><td>7</td><td>Offer from inbox</td><td style="font-size:13.3px">inbox-message-offer</td><td><span class="lbl">Active</span></td><td class="act"><span class="ai"><svg class="abs" style="left:0;top:0" width="25" height="21" viewBox="0 0 25 21"><path d="M16.7 3.6 H6.5 Q4 3.6 4 6.1 V14.6 Q4 17.1 6.5 17.1 H15 Q17.5 17.1 17.5 14.6 V13" fill="none" stroke="#35573d" stroke-width="1.5"/><path d="M10.9 11.2 L18.9 3.2 L22.1 6.4 L14.1 14.4 L10 15.5Z" fill="#1c8026"/><path d="M17.6 4.5 L18.9 3.2 L22.1 6.4 L20.8 7.7Z" fill="#0f4d18"/><circle cx="11.9" cy="13.3" r="0.8" fill="#bfe8bf"/></svg><svg class="abs" style="left:25px;top:0" width="25" height="21" viewBox="0 0 25 21"><path d="M9.3 6 V3.9 Q9.3 3.1 10.1 3.1 H15.2 Q16 3.1 16 3.9 V6" fill="none" stroke="#b84545" stroke-width="1.3"/><rect x="4.7" y="5.7" width="15.7" height="1.5" fill="#bf4343"/><rect x="7" y="7" width="11.9" height="12" rx="0.6" fill="#cc4444"/><rect x="9" y="8.6" width="2" height="8.8" fill="#fde0dc"/><rect x="12" y="8.6" width="2" height="8.8" fill="#fbd5d5"/><rect x="15" y="8.6" width="2" height="8.8" fill="#fde0dc"/></svg></span></td></tr><tr><td><span class="cb"></span></td><td>6</td><td>New inbox message</td><td style="font-size:13.3px">inbox-message</td><td><span class="lbl">Active</span></td><td class="act"><span class="ai"><svg class="abs" style="left:0;top:0" width="25" height="21" viewBox="0 0 25 21"><path d="M16.7 3.6 H6.5 Q4 3.6 4 6.1 V14.6 Q4 17.1 6.5 17.1 H15 Q17.5 17.1 17.5 14.6 V13" fill="none" stroke="#35573d" stroke-width="1.5"/><path d="M10.9 11.2 L18.9 3.2 L22.1 6.4 L14.1 14.4 L10 15.5Z" fill="#1c8026"/><path d="M17.6 4.5 L18.9 3.2 L22.1 6.4 L20.8 7.7Z" fill="#0f4d18"/><circle cx="11.9" cy="13.3" r="0.8" fill="#bfe8bf"/></svg><svg class="abs" style="left:25px;top:0" width="25" height="21" viewBox="0 0 25 21"><path d="M9.3 6 V3.9 Q9.3 3.1 10.1 3.1 H15.2 Q16 3.1 16 3.9 V6" fill="none" stroke="#b84545" stroke-width="1.3"/><rect x="4.7" y="5.7" width="15.7" height="1.5" fill="#bf4343"/><rect x="7" y="7" width="11.9" height="12" rx="0.6" fill="#cc4444"/><rect x="9" y="8.6" width="2" height="8.8" fill="#fde0dc"/><rect x="12" y="8.6" width="2" height="8.8" fill="#fbd5d5"/><rect x="15" y="8.6" width="2" height="8.8" fill="#fde0dc"/></svg></span></td></tr></table>
</div>

<div id="foot" class="abs">
  <div class="abs" style="left:15px;top:18px;line-height:16px;font-size:12.8px;font-weight:bold;color:#444;white-space:nowrap">Copyright &copy; 2019 All rights reserved.</div>
  <div class="abs" style="right:15px;top:18px;line-height:16px;font-size:12.8px;color:#444;white-space:nowrap"><b>Version</b> 2.4.0</div>
</div>
</body></html>
